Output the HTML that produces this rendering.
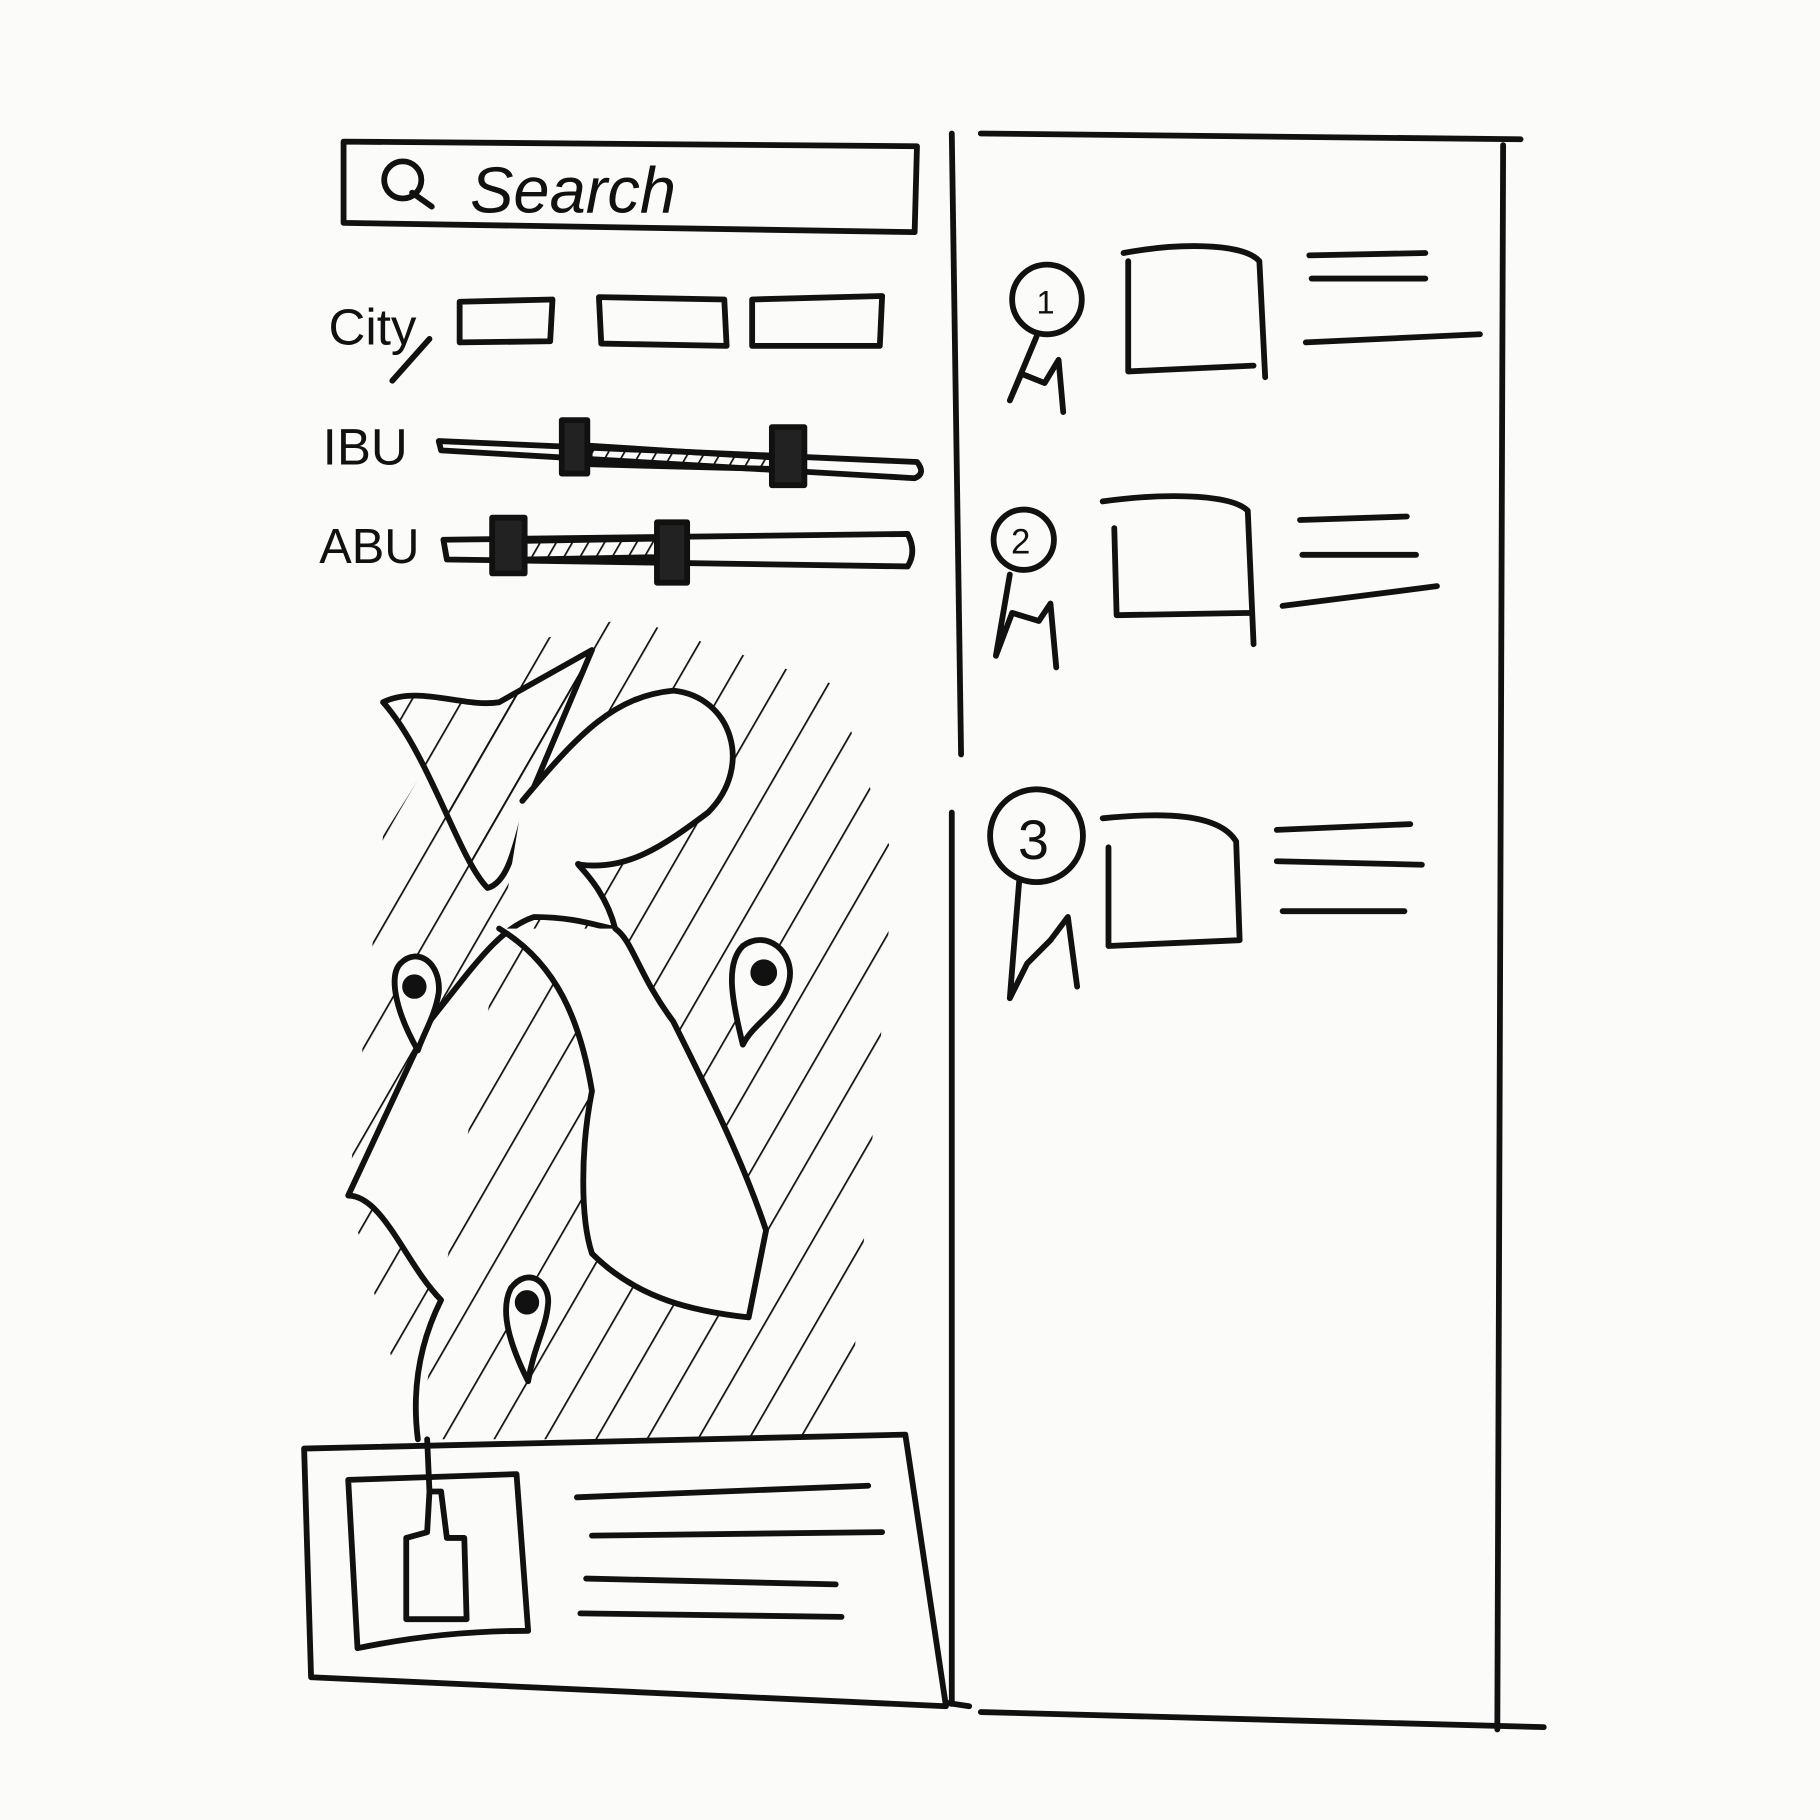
<!DOCTYPE html>
<html><head><meta charset="utf-8"><style>
html,body{margin:0;padding:0;background:#fff;}
svg{display:block}
text{font-family:"Liberation Sans",sans-serif;fill:#111}
</style></head><body>
<svg width="1820" height="1820" viewBox="0 0 1568 1568" xmlns="http://www.w3.org/2000/svg">
<defs>
<pattern id="h" patternUnits="userSpaceOnUse" width="38" height="38" patternTransform="rotate(30)">
<line x1="0" y1="0" x2="0" y2="38" stroke="#111" stroke-width="3"/>
</pattern>
<pattern id="h2" patternUnits="userSpaceOnUse" width="12" height="12" patternTransform="rotate(30)">
<line x1="0" y1="0" x2="0" y2="12" stroke="#111" stroke-width="3"/>
</pattern>
</defs>
<rect width="1568" height="1568" fill="#fbfbfa"/>
<g fill="none" stroke="#111" stroke-width="5" stroke-linecap="round" stroke-linejoin="round">
<!-- search -->
<path d="M296,122 L790,126 L788,200 L296,192 Z"/>
<circle cx="347" cy="155" r="16"/><path d="M355,166 L372,178"/>
<!-- city boxes -->
<path d="M396,260 L476,258 L474,294 L396,295 Z"/>
<path d="M516,256 L624,258 L626,298 L518,296 Z"/>
<path d="M648,258 L760,255 L758,298 L648,298 Z"/>
<path d="M370,292 L338,328"/>
<!-- IBU slider -->
<path d="M378,380 L790,398 Q798,408 788,412 L380,388 Z"/>
<rect x="484" y="362" width="22" height="46" fill="#222"/>
<rect x="665" y="368" width="28" height="50" fill="#222"/>
<path d="M508,384 L665,394 L665,404 L508,400 Z" fill="url(#h2)"/>
<!-- ABU slider -->
<path d="M382,465 L782,460 Q790,475 782,488 L385,482 Z"/>
<rect x="424" y="446" width="28" height="48" fill="#222"/>
<rect x="566" y="450" width="26" height="52" fill="#222"/>
<path d="M452,466 L566,464 L566,480 L452,482 Z" fill="url(#h2)"/>
<!-- map hatch -->
<path d="M540,532 L720,590 L770,740 L760,880 L730,1240 L380,1240 L340,1180 L300,1030 L330,720 L430,560 Z" fill="url(#h)" stroke="none"/>
<!-- wing shape -->
<path d="M330,605 C360,590 400,610 430,605 L510,560 L455,690 C445,720 440,760 420,765 C395,740 370,650 330,605 Z" fill="url(#h)"/>
<!-- island -->
<path d="M450,690 C500,630 530,600 580,595 C630,600 650,660 610,700 C570,730 540,750 500,745 C490,740 520,760 530,800 C520,800 500,790 460,790 C430,800 410,830 370,880 L300,1030 C330,1030 350,1090 380,1120 C360,1160 355,1200 360,1240" fill="#fbfbfa"/>
<path d="M430,800 C480,830 500,880 510,940 C500,990 500,1050 510,1080 C550,1120 600,1130 645,1135 L660,1060 C640,1000 610,940 580,880 C550,840 545,810 530,800" fill="#fbfbfa"/>
<!-- pins -->
<path d="M360,905 C340,870 335,840 345,830 C360,815 380,830 378,855 C375,875 365,890 360,905 Z" fill="#fbfbfa"/><circle cx="357" cy="850" r="8" fill="#111"/>
<path d="M640,900 C630,860 625,830 640,815 C660,800 685,820 680,845 C675,870 650,880 640,900 Z" fill="#fbfbfa"/><circle cx="658" cy="838" r="9" fill="#111"/>
<path d="M455,1190 C440,1160 430,1130 440,1110 C455,1090 475,1105 472,1125 C470,1145 460,1160 455,1190 Z" fill="#fbfbfa"/><circle cx="454" cy="1122" r="8" fill="#111"/>
<!-- bottom card -->
<path d="M262,1248 L780,1236 L815,1470 L268,1445 Z" fill="#fbfbfa"/>
<path d="M300,1275 L445,1270 L455,1405 Q380,1405 308,1420 Z"/>
<path d="M350,1395 L350,1325 L368,1320 L370,1285 L380,1285 L385,1325 L400,1325 L402,1395 Z"/>
<path d="M368,1240 L370,1285"/>
<path d="M497,1290 L748,1280 M510,1323 L760,1320 M505,1360 L720,1365 M500,1390 L725,1393"/>
<!-- right panel -->
<path d="M820,700 L820,1468 M820,115 L828,650 M845,115 L1310,120 M1295,125 L1290,1490 M845,1475 L1330,1488 M815,1467 L835,1470"/>
<!-- item 1 -->
<circle cx="902" cy="258" r="30"/>
<path d="M893,290 L870,345 L880,322 L900,330 L912,310 L916,355"/>
<path d="M968,218 C1010,210 1070,208 1085,225 L1090,325 M972,225 L972,320 L1080,315"/>
<path d="M1128,220 L1228,218 M1130,240 L1228,240 M1125,295 L1275,288"/>
<!-- item 2 -->
<circle cx="882" cy="465" r="26"/>
<path d="M870,495 L858,565 L872,528 L895,535 L905,520 L910,575"/>
<path d="M950,432 C1000,425 1060,425 1075,440 L1080,555 M960,455 L962,530 L1078,528"/>
<path d="M1120,448 L1212,445 M1122,478 L1220,478 M1105,522 L1238,505"/>
<!-- item 3 -->
<circle cx="893" cy="720" r="40"/>
<path d="M878,760 L870,860 L885,830 L905,810 L920,790 L928,850"/>
<path d="M950,705 C1000,700 1050,700 1065,725 L1068,810 L955,815 L955,730"/>
<path d="M1100,715 L1215,710 M1100,742 L1225,745 M1105,785 L1210,785"/>
</g>
<text x="405" y="183" font-size="56" font-style="italic">Search</text>
<text x="283" y="297" font-size="44">City</text>
<text x="278" y="400" font-size="44">IBU</text>
<text x="275" y="485" font-size="42">ABU</text>
<text x="893" y="270" font-size="28">1</text>
<text x="871" y="477" font-size="30">2</text>
<text x="877" y="740" font-size="48">3</text>
</svg>
</body></html>
